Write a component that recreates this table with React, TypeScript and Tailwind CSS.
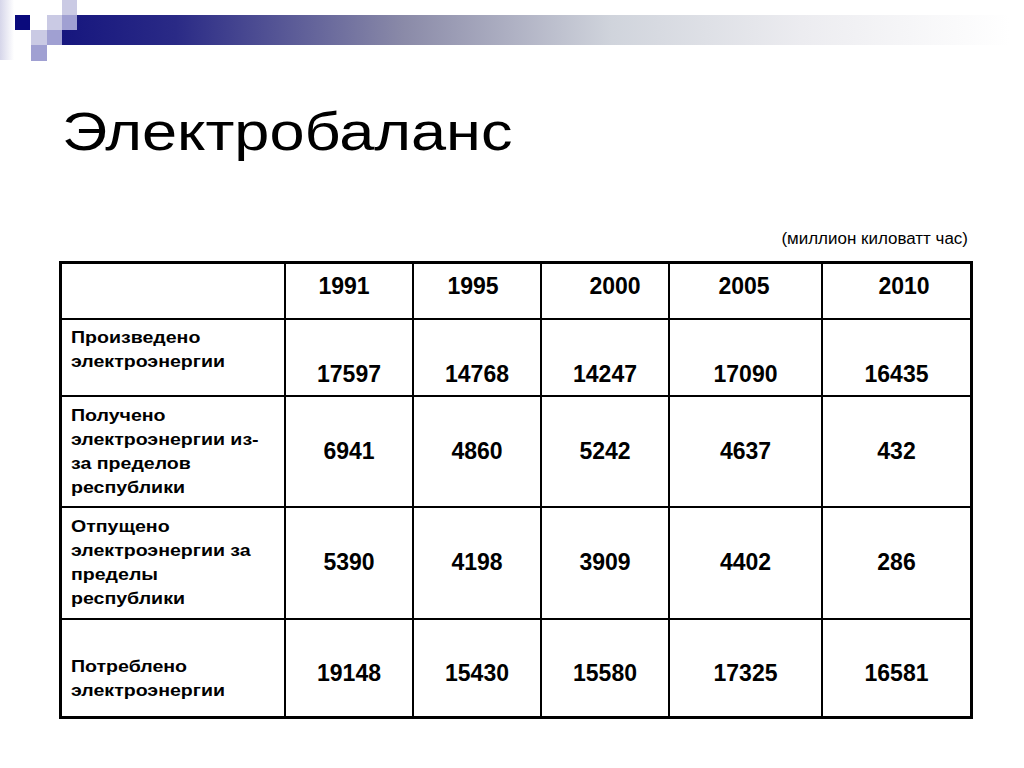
import React from "react";

const years = [
  { y: "1991", cls: "pr-[10px]" },
  { y: "1995", cls: "pr-[8px]" },
  { y: "2000", cls: "pl-[20px]" },
  { y: "2005", cls: "pr-[3px]" },
  { y: "2010", cls: "pl-[15px]" },
];

const rows = [
  {
    label: ["Произведено", "электроэнергии"],
    values: ["17597", "14768", "14247", "17090", "16435"],
    h: "h-[77px]",
    labelCls: "items-start pt-[6px]",
    valCls: "items-start pt-[43px]",
  },
  {
    label: ["Получено", "электроэнергии из-", "за пределов", "республики"],
    values: ["6941", "4860", "5242", "4637", "432"],
    h: "h-[111px]",
    labelCls: "items-center",
    valCls: "items-center",
  },
  {
    label: ["Отпущено", "электроэнергии за", "пределы", "республики"],
    values: ["5390", "4198", "3909", "4402", "286"],
    h: "h-[112px]",
    labelCls: "items-center",
    valCls: "items-center pb-[2px]",
  },
  {
    label: ["Потреблено", "электроэнергии"],
    values: ["19148", "15430", "15580", "17325", "16581"],
    h: "h-[98px]",
    labelCls: "items-center pt-[22px]",
    valCls: "items-center pt-[10px]",
  },
];

const colW = ["w-[222px]", "w-[128px]", "w-[128px]", "w-[128px]", "w-[153px]", "w-[149px]"];

function Decoration() {
  return (
    <svg width="1024" height="62" viewBox="0 0 1024 62" className="block">
      <defs>
        <linearGradient id="bar" x1="62" y1="0" x2="1010" y2="0" gradientUnits="userSpaceOnUse">
          <stop offset="0" stopColor="#16167e" />
          <stop offset="0.12" stopColor="#2a2a86" />
          <stop offset="0.36" stopColor="#8a8aa8" />
          <stop offset="0.58" stopColor="#d0d4dc" />
          <stop offset="0.78" stopColor="#ececf0" />
          <stop offset="1" stopColor="#ffffff" />
        </linearGradient>
        <linearGradient id="strip" x1="0" y1="0" x2="14" y2="0" gradientUnits="userSpaceOnUse">
          <stop offset="0" stopColor="#d6d6ea" />
          <stop offset="1" stopColor="#ffffff" />
        </linearGradient>
      </defs>
      <rect x="0" y="0" width="14" height="60" fill="url(#strip)" />
      <rect x="62" y="15" width="950" height="30" fill="url(#bar)" />
      <rect x="15" y="15" width="15" height="15" fill="#0a0a7c" />
      <rect x="62" y="0" width="15" height="15" fill="#cacae4" />
      <rect x="47" y="15" width="15" height="15" fill="#cacae4" />
      <rect x="62" y="15" width="15" height="15" fill="#a0a0d2" />
      <rect x="31" y="30" width="16" height="15" fill="#cacae4" />
      <rect x="47" y="30" width="15" height="15" fill="#a0a0d2" />
      <rect x="31" y="45" width="16" height="16" fill="#a0a0d2" />
    </svg>
  );
}

export default function App() {
  return (
    <div
      className="w-[1024px] h-[768px] bg-white text-black overflow-hidden"
      style={{ fontFamily: '"Liberation Sans", Arial, sans-serif' }}
    >
      <Decoration />
      <div className="pl-[62px] mt-[43px] text-[53px] leading-[53px] whitespace-nowrap">
        <span className="inline-block origin-left scale-x-[1.19]">Электробаланс</span>
      </div>
      <div className="flex justify-end pr-[56px] mt-[73px] text-[16px] leading-[16px] whitespace-nowrap">
        <span className="inline-block origin-right scale-x-[1.06]">(миллион киловатт час)</span>
      </div>
      <div className="ml-[59px] mt-[14px] w-[914px] border-[3px] border-black">
        <div className="flex h-[54px]">
          <div className={colW[0]} />
          {years.map((c, i) => (
            <div
              key={c.y}
              className={`${colW[i + 1]} border-l-2 border-black flex justify-center pt-[11px] text-[23px] leading-[23px] font-bold ${c.cls}`}
            >
              {c.y}
            </div>
          ))}
        </div>
        {rows.map((r, ri) => (
          <div key={ri} className={`flex border-t-2 border-black ${r.h}`}>
            <div className={`${colW[0]} flex ${r.labelCls} pl-[9px] text-[17px] leading-[24px] font-bold`}>
              <div className="whitespace-nowrap origin-left scale-x-[1.15]">
                {r.label.map((l, li) => (
                  <div key={li}>{l}</div>
                ))}
              </div>
            </div>
            {r.values.map((v, vi) => (
              <div
                key={vi}
                className={`${colW[vi + 1]} border-l-2 border-black flex justify-center ${r.valCls} text-[23px] leading-[23px] font-bold`}
              >
                {v}
              </div>
            ))}
          </div>
        ))}
      </div>
    </div>
  );
}
